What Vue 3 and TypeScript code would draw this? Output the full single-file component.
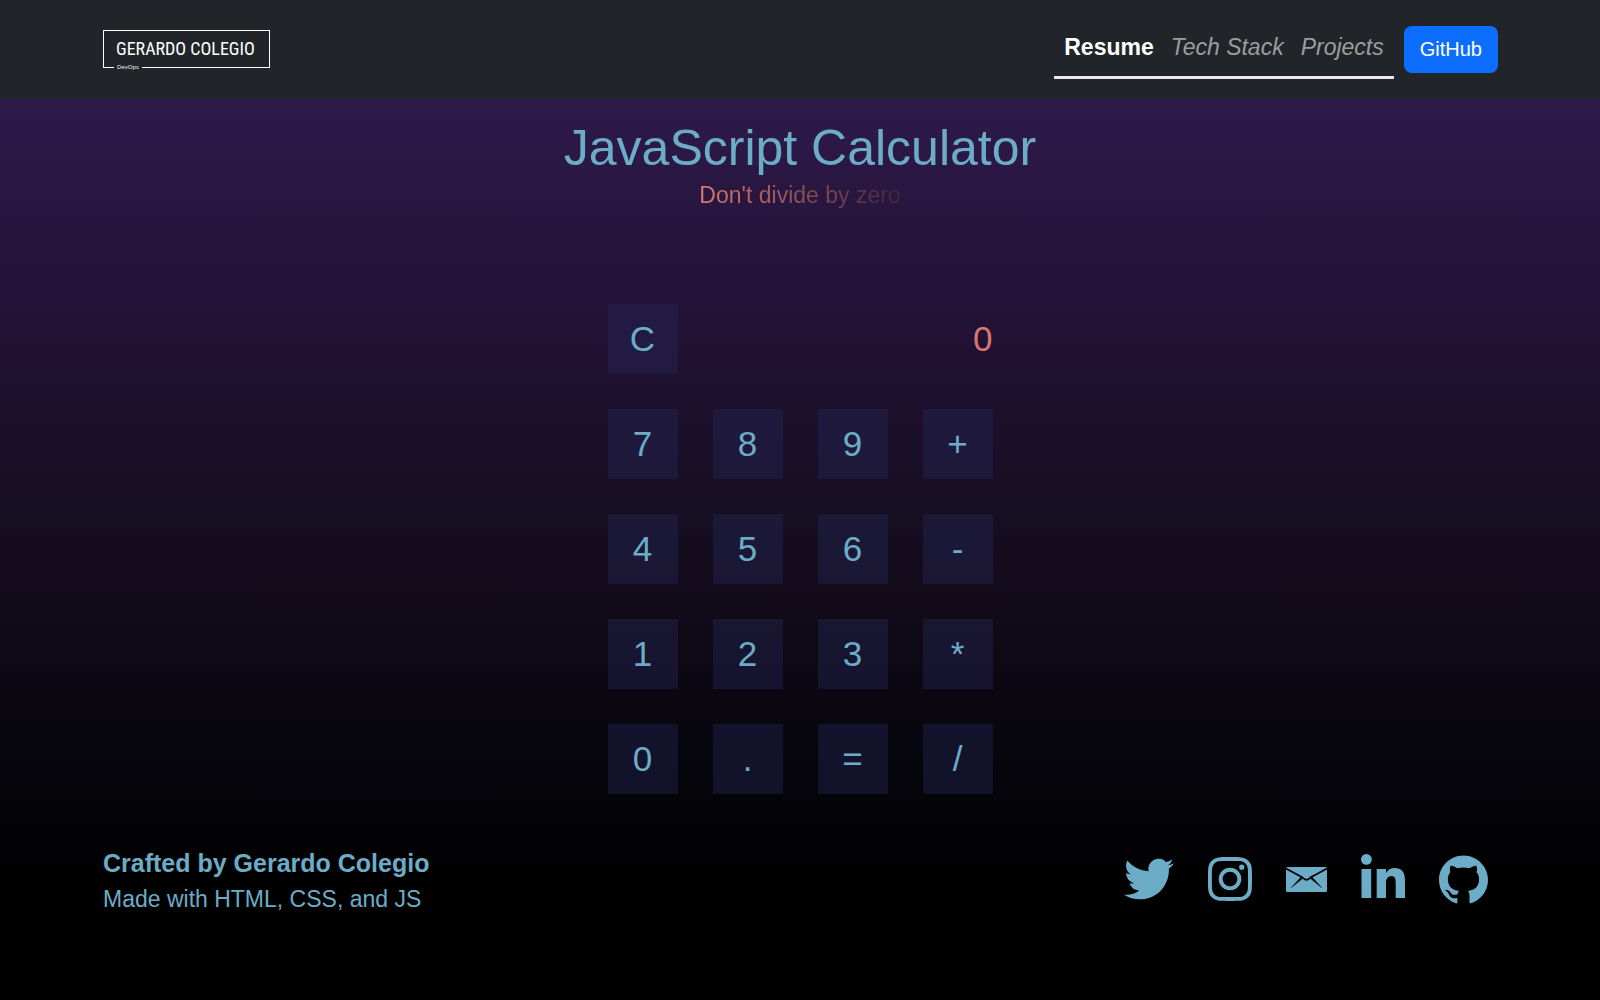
<script setup lang="ts">
import { ref } from 'vue'

interface Key {
  label: string
  name: string
}

const keys: Key[] = [
  { label: '7', name: 'seven' },
  { label: '8', name: 'eight' },
  { label: '9', name: 'nine' },
  { label: '+', name: 'plus' },
  { label: '4', name: 'four' },
  { label: '5', name: 'five' },
  { label: '6', name: 'six' },
  { label: '-', name: 'minus' },
  { label: '1', name: 'one' },
  { label: '2', name: 'two' },
  { label: '3', name: 'three' },
  { label: '*', name: 'times' },
  { label: '0', name: 'zero' },
  { label: '.', name: 'point' },
  { label: '=', name: 'equals' },
  { label: '/', name: 'divide' },
]

const current = ref('0')
const stored = ref<number | null>(null)
const operator = ref('')
const fresh = ref(true)

function clear(): void {
  current.value = '0'
  stored.value = null
  operator.value = ''
  fresh.value = true
}

function compute(a: number, b: number, op: string): number {
  if (op === '+') return a + b
  if (op === '-') return a - b
  if (op === '*') return a * b
  return a / b
}

function press(label: string): void {
  if (/[0-9.]/.test(label)) {
    if (fresh.value) {
      current.value = label === '.' ? '0.' : label
      fresh.value = false
    } else if (label !== '.' || !current.value.includes('.')) {
      current.value += label
    }
    return
  }
  if (stored.value !== null && operator.value && !fresh.value) {
    current.value = String(compute(stored.value, Number(current.value), operator.value))
  }
  stored.value = Number(current.value)
  operator.value = label === '=' ? '' : label
  fresh.value = true
}
</script>

<template>
  <div class="page">
    <header class="topbar">
      <a class="brand" href="#" aria-label="Gerardo Colegio DevOps">
        <span class="brand-name">GERARDO COLEGIO</span>
        <span class="brand-role">DevOps</span>
      </a>
      <nav class="nav">
        <div class="links">
          <a class="link active" href="#resume">Resume</a>
          <a class="link" href="#stack">Tech Stack</a>
          <a class="link" href="#projects">Projects</a>
        </div>
        <button class="github" type="button">GitHub</button>
      </nav>
    </header>

    <main class="main">
      <h1 class="title">JavaScript Calculator</h1>
      <p class="subtitle">Don't divide by zero</p>
      <section class="calculator" aria-label="Calculator">
        <button class="key" type="button" aria-label="clear" @click="clear">C</button>
        <output class="display">{{ current }}</output>
        <button
          v-for="key in keys"
          :key="key.label"
          class="key"
          type="button"
          :aria-label="key.name"
          @click="press(key.label)"
        >{{ key.label }}</button>
      </section>
    </main>

    <footer class="footer">
      <div class="credits">
        <p class="author">Crafted by Gerardo Colegio</p>
        <p class="made">Made with HTML, CSS, and JS</p>
      </div>
      <div class="social">
        <a href="#twitter" aria-label="Twitter">
          <svg width="50" height="50" viewBox="0 0 24 24"><path d="M23.953 4.57a10 10 0 01-2.825.775 4.958 4.958 0 002.163-2.723c-.951.555-2.005.959-3.127 1.184a4.92 4.92 0 00-8.384 4.482C7.69 8.095 4.067 6.13 1.64 3.162a4.822 4.822 0 00-.666 2.475c0 1.71.87 3.213 2.188 4.096a4.904 4.904 0 01-2.228-.616v.06a4.923 4.923 0 003.946 4.827 4.996 4.996 0 01-2.212.085 4.936 4.936 0 004.604 3.417 9.867 9.867 0 01-6.102 2.105c-.39 0-.779-.023-1.17-.067a13.995 13.995 0 007.557 2.209c9.053 0 13.998-7.496 13.998-13.985 0-.21 0-.42-.015-.63A9.935 9.935 0 0024 4.59z" /></svg>
        </a>
        <a href="#instagram" aria-label="Instagram">
          <svg width="44" height="44" viewBox="0 0 24 24"><path d="M12 0C8.74 0 8.333.015 7.053.072 5.775.132 4.905.333 4.14.63c-.789.306-1.459.717-2.126 1.384S.935 3.35.63 4.14C.333 4.905.131 5.775.072 7.053.012 8.333 0 8.74 0 12s.015 3.667.072 4.947c.06 1.277.261 2.148.558 2.913.306.788.717 1.459 1.384 2.126.667.666 1.336 1.079 2.126 1.384.766.296 1.636.499 2.913.558C8.333 23.988 8.74 24 12 24s3.667-.015 4.947-.072c1.277-.06 2.148-.262 2.913-.558.788-.306 1.459-.718 2.126-1.384.666-.667 1.079-1.335 1.384-2.126.296-.765.499-1.636.558-2.913.06-1.28.072-1.687.072-4.947s-.015-3.667-.072-4.947c-.06-1.277-.262-2.149-.558-2.913-.306-.789-.718-1.459-1.384-2.126C21.319 1.347 20.651.935 19.86.63c-.765-.297-1.636-.499-2.913-.558C15.667.012 15.26 0 12 0zm0 2.16c3.203 0 3.585.016 4.85.071 1.17.055 1.805.249 2.227.415.562.217.96.477 1.382.896.419.42.679.819.896 1.381.164.422.36 1.057.413 2.227.057 1.266.07 1.646.07 4.85s-.015 3.585-.074 4.85c-.061 1.17-.256 1.805-.421 2.227-.224.562-.479.96-.899 1.382-.419.419-.824.679-1.38.896-.42.164-1.065.36-2.235.413-1.274.057-1.649.07-4.859.07-3.211 0-3.586-.015-4.859-.074-1.171-.061-1.816-.256-2.236-.421-.569-.224-.96-.479-1.379-.899-.421-.419-.69-.824-.9-1.38-.165-.42-.359-1.065-.42-2.235-.045-1.26-.061-1.649-.061-4.844 0-3.196.016-3.586.061-4.861.061-1.17.255-1.814.42-2.234.21-.57.479-.96.9-1.381.419-.419.81-.689 1.379-.898.42-.166 1.051-.361 2.221-.421 1.275-.045 1.65-.06 4.859-.06zm0 3.678a6.162 6.162 0 100 12.324 6.162 6.162 0 100-12.324zM12 16c-2.21 0-4-1.79-4-4s1.79-4 4-4 4 1.79 4 4-1.79 4-4 4zm7.846-10.405a1.441 1.441 0 01-2.88 0 1.44 1.44 0 012.88 0z" /></svg>
        </a>
        <a href="#mail" aria-label="Email">
          <svg width="41" height="25" viewBox="0 0 41 25"><rect width="41" height="25" rx="1.5" /><path d="M0 1.500L16.500 10.500Q20.500 15 24.500 10.500L41 1.500" fill="none" stroke="#020104" stroke-width="1.800" /><path d="M14.800 10.200L5.500 20.500L16.500 11.500zM26.200 10.200L35.500 20.500L24.500 11.500z" fill="#020104" stroke="#020104" stroke-width=".5" /></svg>
        </a>
        <a href="#linkedin" aria-label="LinkedIn">
          <svg width="44" height="50" viewBox="0 0 44 50"><circle cx="5.4" cy="5.4" r="5.4" /><path d="M.5 15H10.2V44H.5zM15.7 15H25V19C27 15.500 30 14 33.500 14C41.500 14 44 19 44 27V44H34.700V29C34.700 25 34.200 22 30.500 22S25 25 25 29V44H15.700z" /></svg>
        </a>
        <a href="#github" aria-label="GitHub profile">
          <svg width="49" height="49" viewBox="0 0 24 24"><path d="M12 .297c-6.630 0-12 5.373-12 12 0 5.303 3.438 9.800 8.205 11.385.6.113.820-.258.820-.577 0-.285-.010-1.040-.015-2.040-3.338.724-4.042-1.610-4.042-1.610C4.422 18.070 3.633 17.700 3.633 17.700c-1.087-.744.084-.729.084-.729 1.205.084 1.838 1.236 1.838 1.236 1.070 1.835 2.809 1.305 3.495.998.108-.776.417-1.305.760-1.605-2.665-.300-5.466-1.332-5.466-5.930 0-1.310.465-2.380 1.235-3.220-.135-.303-.540-1.523.105-3.176 0 0 1.005-.322 3.300 1.230.960-.267 1.980-.399 3-.405 1.020.006 2.040.138 3 .405 2.280-1.552 3.285-1.230 3.285-1.230.645 1.653.240 2.873.120 3.176.765.840 1.230 1.910 1.230 3.220 0 4.610-2.805 5.625-5.475 5.920.420.360.810 1.096.810 2.220 0 1.606-.015 2.896-.015 3.286 0 .315.210.690.825.570C20.565 22.092 24 17.592 24 12.297c0-6.627-5.373-12-12-12" /></svg>
        </a>
      </div>
    </footer>
  </div>
</template>

<style>
body {
  background: #000;
}
</style>

<style scoped>
.page {
  display: flex;
  flex-direction: column;
  min-height: 100vh;
  font-family: "Liberation Sans", Arial, sans-serif;
  color: #6cacc7;
  background: linear-gradient(#311c4e 0%, #2e1a4a 10%, #211133 34%, #170f23 50%, #110a18 62%, #08060f 73%, #020204 85%, #000 93%);
}

.topbar {
  display: flex;
  align-items: center;
  justify-content: space-between;
  height: 99px;
  padding: 0 102px 0 103px;
  background: #212529;
}

.brand {
  position: relative;
  display: block;
  padding: 1px 14px 0 12px;
  margin-bottom: 2px;
  border: 1px solid #fff;
  color: #fff;
  line-height: 34px;
  text-decoration: none;
}

.brand-name {
  font-family: "Roboto Condensed", Roboto, sans-serif;
  font-size: 18px;
}

.brand-role {
  position: absolute;
  left: 10px;
  bottom: -4px;
  padding: 0 3px;
  background: #212529;
  font-family: "Open Sans", sans-serif;
  font-size: 6px;
  line-height: 8px;
}

.nav {
  display: flex;
  align-items: center;
  gap: 10px;
}

.links {
  display: flex;
  gap: 17px;
  padding: 10px 10px 12px;
  border-bottom: 3px solid #efe9ed;
}

.link {
  color: #9b9d9e;
  font-size: 23px;
  font-style: italic;
  line-height: 34px;
  text-decoration: none;
}

.link.active {
  color: #fff;
  font-style: normal;
  font-weight: bold;
}

.github {
  height: 47px;
  padding: 0 16px;
  border: 0;
  border-radius: 8px;
  background: #0d6efd;
  color: #fff;
  font: 20px "Liberation Sans", Arial, sans-serif;
}

.main {
  display: flex;
  flex-direction: column;
  align-items: center;
  padding-top: 19px;
}

.title {
  margin: 0;
  font-size: 50px;
  font-weight: normal;
  line-height: 60px;
}

.subtitle {
  margin: 0 0 91px;
  font-size: 23px;
  line-height: 35px;
  color: transparent;
  background: linear-gradient(to right, #d9796f, #3c263f);
  background-clip: text;
}

.calculator {
  display: grid;
  grid-template-columns: repeat(4, 70px);
  grid-auto-rows: 70px;
  gap: 35px;
}

.key {
  padding: 0;
  border: 0;
  background: rgba(38, 40, 90, 0.4);
  color: #6cacc7;
  font: 35px "Liberation Sans", Arial, sans-serif;
}

.display {
  grid-column: span 3;
  color: #d9776f;
  font-size: 35px;
  line-height: 70px;
  text-align: right;
}

.footer {
  display: flex;
  justify-content: space-between;
  padding: 51px 112px 0 103px;
}

.author,
.made {
  margin: 0;
  line-height: 36px;
}

.author {
  font-size: 25px;
  font-weight: bold;
}

.made {
  font-size: 23px;
}

.social {
  display: flex;
  align-items: center;
  gap: 34px;
  padding-bottom: 4px;
}

.social a {
  display: flex;
}

.social svg {
  fill: #6cacc7;
}
</style>
